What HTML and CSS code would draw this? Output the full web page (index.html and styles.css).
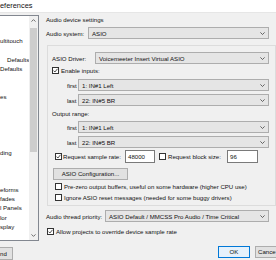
FILE: index.html
```html
<!DOCTYPE html>
<html lang="en">
<head>
    <meta charset="UTF-8">
    <title>Preferences</title>
    <link rel="stylesheet" href="styles.css">
</head>
<body>
    <div class="titlebar">eferences</div>

    <div class="main">
        <div class="sidebar">
            <div class="tree">
                <ul class="tree-items">
                    <li></li>
                    <li></li>
                    <li>ultitouch</li>
                    <li></li>
                    <li class="indent">Defaults</li>
                    <li>Defaults</li>
                    <li></li>
                    <li></li>
                    <li>es</li>
                    <li></li>
                    <li></li>
                    <li></li>
                    <li></li>
                    <li></li>
                    <li>ding</li>
                    <li></li>
                    <li></li>
                    <li></li>
                    <li>eforms</li>
                    <li>fades</li>
                    <li>l Panels</li>
                    <li>lor</li>
                    <li>splay</li>
                </ul>
                <div class="scrollbar">
                    <div class="arrow">
                        <svg width="5" height="3" viewBox="0 0 5 3"><polyline points="0.5,2.6 2.5,0.6 4.5,2.6" fill="none" stroke="#606060" stroke-width="0.9"/></svg>
                    </div>
                    <div class="track"><div class="thumb"></div></div>
                    <div class="arrow">
                        <svg width="5" height="3" viewBox="0 0 5 3"><polyline points="0.5,0.4 2.5,2.4 4.5,0.4" fill="none" stroke="#606060" stroke-width="0.9"/></svg>
                    </div>
                </div>
            </div>
            <button class="btn btn-cut">nd</button>
        </div>

        <div class="content">
            <div class="section-label">Audio device settings</div>

            <div class="row">
                <span class="label label-system">Audio system:</span>
                <div class="combo"><span>ASIO</span><svg class="chevron" width="5" height="3" viewBox="0 0 5 3"><polyline points="0.4,0.4 2.5,2.5 4.6,0.4" fill="none" stroke="#444" stroke-width="0.8"/></svg></div>
            </div>

            <div class="asio-box">
                <div class="row row-inner">
                    <span class="label label-driver">ASIO Driver:</span>
                    <div class="combo"><span>Voicemeeter Insert Virtual ASIO</span><svg class="chevron" width="5" height="3" viewBox="0 0 5 3"><polyline points="0.4,0.4 2.5,2.5 4.6,0.4" fill="none" stroke="#444" stroke-width="0.8"/></svg></div>
                </div>

                <div class="check-row">
                    <span class="check checked"><svg width="5" height="5" viewBox="0 0 5 5"><polyline points="0.5,2.6 1.9,4 4.5,0.8" fill="none" stroke="#222" stroke-width="0.8"/></svg></span>
                    <span>Enable inputs:</span>
                </div>

                <div class="row row-inner row-range first-range">
                    <span class="label label-range">first</span>
                    <div class="combo"><span>1: IN#1 Left</span><svg class="chevron" width="5" height="3" viewBox="0 0 5 3"><polyline points="0.4,0.4 2.5,2.5 4.6,0.4" fill="none" stroke="#444" stroke-width="0.8"/></svg></div>
                </div>
                <div class="row row-inner row-range">
                    <span class="label label-range">last</span>
                    <div class="combo"><span>22: IN#5 BR</span><svg class="chevron" width="5" height="3" viewBox="0 0 5 3"><polyline points="0.4,0.4 2.5,2.5 4.6,0.4" fill="none" stroke="#444" stroke-width="0.8"/></svg></div>
                </div>

                <div class="plain-row">Output range:</div>

                <div class="row row-inner row-range out-first">
                    <span class="label label-range">first</span>
                    <div class="combo"><span>1: IN#1 Left</span><svg class="chevron" width="5" height="3" viewBox="0 0 5 3"><polyline points="0.4,0.4 2.5,2.5 4.6,0.4" fill="none" stroke="#444" stroke-width="0.8"/></svg></div>
                </div>
                <div class="row row-inner row-range">
                    <span class="label label-range">last</span>
                    <div class="combo"><span>22: IN#5 BR</span><svg class="chevron" width="5" height="3" viewBox="0 0 5 3"><polyline points="0.4,0.4 2.5,2.5 4.6,0.4" fill="none" stroke="#444" stroke-width="0.8"/></svg></div>
                </div>

                <div class="rate-row">
                    <span class="check checked"><svg width="5" height="5" viewBox="0 0 5 5"><polyline points="0.5,2.6 1.9,4 4.5,0.8" fill="none" stroke="#222" stroke-width="0.8"/></svg></span>
                    <span class="rate-label">Request sample rate:</span>
                    <div class="textbox rate-box">48000</div>
                    <span class="check block-check"></span>
                    <span class="block-label">Request block size:</span>
                    <div class="textbox block-box">96</div>
                </div>

                <button class="btn btn-config">ASIO Configuration...</button>

                <div class="check-row option">
                    <span class="check"></span>
                    <span>Pre-zero output buffers, useful on some hardware (higher CPU use)</span>
                </div>
                <div class="check-row option">
                    <span class="check"></span>
                    <span>Ignore ASIO reset messages (needed for some buggy drivers)</span>
                </div>
            </div>

            <div class="row thread-row">
                <span class="label label-thread">Audio thread priority:</span>
                <div class="combo"><span>ASIO Default / MMCSS Pro Audio / Time Critical</span><svg class="chevron" width="5" height="3" viewBox="0 0 5 3"><polyline points="0.4,0.4 2.5,2.5 4.6,0.4" fill="none" stroke="#444" stroke-width="0.8"/></svg></div>
            </div>

            <div class="check-row allow-row">
                <span class="check checked"><svg width="5" height="5" viewBox="0 0 5 5"><polyline points="0.5,2.6 1.9,4 4.5,0.8" fill="none" stroke="#222" stroke-width="0.8"/></svg></span>
                <span>Allow projects to override device sample rate</span>
            </div>

            <div class="actions">
                <button class="btn btn-ok">OK</button>
                <button class="btn btn-cancel">Cance</button>
            </div>
        </div>
    </div>
</body>
</html>
```

FILE: styles.css
```css
* {
    box-sizing: border-box;
}
body {
    margin: 0;
    width: 276px;
    height: 260px;
    overflow: hidden;
    background-color: #f0f0f0;
    font-family: 'Liberation Sans', Arial, sans-serif;
    font-size: 6.1px;
    color: #111;
}
.titlebar {
    height: 13px;
    background-color: #fff;
    font-size: 7.4px;
    line-height: 11px;
    border-bottom: 1px solid #e6e6e6;
    white-space: nowrap;
}
.main {
    display: flex;
    height: 247px;
}

/* left tree */
.sidebar {
    width: 40px;
    flex-shrink: 0;
    padding-top: 2px;
    display: flex;
    flex-direction: column;
}
.tree {
    width: 39px;
    height: 227px;
    background-color: #fff;
    border: 1px solid #828790;
    border-left: none;
    display: flex;
}
.tree-items {
    list-style: none;
    margin: 0;
    padding: 1.4px 0 0 0;
    width: 29px;
    overflow: hidden;
    white-space: nowrap;
}
.tree-items li {
    height: 9.3px;
    line-height: 9.3px;
}
.tree-items li.indent {
    padding-left: 7px;
}
.scrollbar {
    width: 9px;
    background-color: #f0f0f0;
    display: flex;
    flex-direction: column;
}
.arrow {
    height: 9px;
    display: flex;
    align-items: center;
    justify-content: center;
}
.track {
    flex: 1;
    padding: 3px 1px 0 1px;
}
.thumb {
    height: 124px;
    background-color: #cdcdcd;
}

/* buttons */
.btn {
    font-family: inherit;
    font-size: inherit;
    color: #111;
    background-color: #e1e1e1;
    border: 1px solid #adadad;
    padding: 0;
    height: 12px;
    line-height: 10px;
    text-align: center;
    white-space: nowrap;
}
.btn-cut {
    width: 13px;
    height: 13px;
    margin-top: 6px;
    text-align: left;
    border-left: none;
}

/* right side */
.content {
    flex: 1;
    padding: 3px 11px 0 6px;
    display: flex;
    flex-direction: column;
    white-space: nowrap;
}
.section-label {
    height: 8px;
    line-height: 8px;
}
.row {
    display: flex;
    align-items: center;
    height: 12px;
    margin-top: 3px;
    margin-right: 7px;
}
.label {
    flex-shrink: 0;
}
.label-system {
    width: 42px;
}
.label-driver {
    width: 43px;
}
.label-range {
    width: 11px;
}
.label-thread {
    width: 59px;
}
.combo {
    flex: 1;
    height: 12px;
    background-color: #e5e5e5;
    border: 1px solid #adadad;
    display: flex;
    align-items: center;
    padding: 0 3px 0 3px;
    overflow: hidden;
}
.chevron {
    margin-left: auto;
    flex-shrink: 0;
}
.asio-box {
    margin-top: 6px;
    margin-left: 1px;
    border: 1px solid #dcdcdc;
    padding: 6px 6px 3px 4px;
}
.row-inner {
    margin-top: 0;
    margin-right: 0;
}
.row-range {
    padding-left: 15px;
    margin-top: 3px;
}
.first-range {
    margin-top: 4px;
}
.out-first {
    margin-top: 2px;
}
.plain-row {
    height: 10px;
    line-height: 10px;
    margin-top: 3px;
}
.check-row {
    display: flex;
    align-items: center;
    gap: 2px;
    height: 10px;
    margin-top: 1px;
}
.check {
    width: 7px;
    height: 7px;
    flex-shrink: 0;
    background-color: #fff;
    border: 1px solid #333;
    display: flex;
    align-items: center;
    justify-content: center;
}
.rate-row {
    display: flex;
    align-items: center;
    height: 13px;
    margin-top: 2px;
    padding-left: 3px;
}
.rate-label {
    width: 62px;
    margin-left: 1px;
}
.textbox {
    height: 13px;
    line-height: 11px;
    background-color: #fff;
    border: 1px solid #7a7a7a;
    padding-left: 2px;
}
.rate-box {
    width: 30px;
}
.block-check {
    margin-left: 4px;
}
.block-label {
    width: 59px;
    margin-left: 2px;
}
.block-box {
    width: 31px;
}
.btn-config {
    width: 75px;
    margin-top: 5px;
    margin-left: 1px;
}
.option {
    padding-left: 3px;
}
.check-row.option:first-of-type {
    margin-top: 2px;
}
.thread-row {
    margin-top: 4px;
}
.allow-row {
    margin-top: 4px;
    padding-left: 1px;
}
.actions {
    display: flex;
    gap: 5px;
    margin-top: 10px;
    padding-left: 172px;
}
.btn-ok {
    width: 32px;
    flex-shrink: 0;
    border-color: #0078d7;
    background-color: #e5f1fb;
}
.btn-cancel {
    width: 21px;
    flex-shrink: 0;
    border-right: none;
    text-align: left;
    padding-left: 2px;
    overflow: hidden;
}
```
